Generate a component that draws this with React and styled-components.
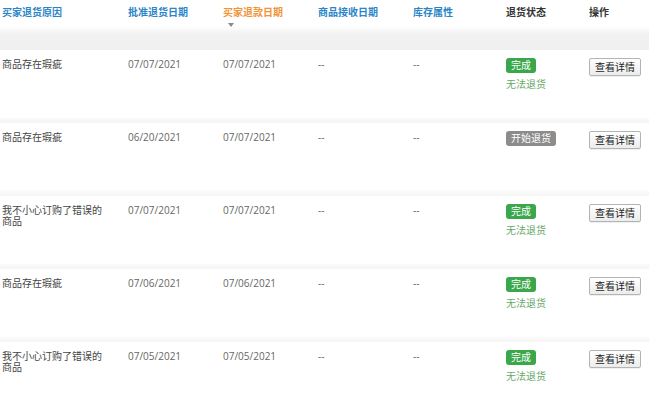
import React from "react";
import styled, { createGlobalStyle } from "styled-components";

const Global = createGlobalStyle`
  html, body { margin: 0; padding: 0; background: #fff; }
  body { font-family: "Open Sans", "Noto Sans CJK SC", sans-serif; }
`;

const cols = "126px 95px 95px 95px 93px 83px 1fr";

const Table = styled.div`
  width: 649px;
  box-sizing: border-box;
`;

const HeaderRow = styled.div`
  display: grid;
  grid-template-columns: ${cols};
  height: 50px;
  padding-left: 2px;
  box-sizing: border-box;
  background: linear-gradient(to bottom, #ffffff 0px, #ffffff 26px, #f1f1f1 34px, #f0f0f0 100%);
`;

const Th = styled.div`
  padding-top: 6px;
  font-size: 10px;
  line-height: 13px;
  font-weight: 700;
  color: ${(p) => (p.$tone === "sort" ? "#f0943a" : p.$tone === "plain" ? "#333" : "#2a86c8")};
  display: flex;
  flex-direction: column;
  align-items: flex-start;
`;

const SortArrow = styled.span`
  margin: 4px 0 0 5px;
  width: 0;
  height: 0;
  border-left: 3px solid transparent;
  border-right: 3px solid transparent;
  border-top: 4px solid #8a8a8a;
`;

const Row = styled.div`
  display: grid;
  grid-template-columns: ${cols};
  height: 73px;
  padding: 7px 0 0 2px;
  box-sizing: border-box;
  background: linear-gradient(to bottom, #ffffff 0px, #ffffff 67px, #f9f9f9 69px, #f5f5f5 73px);
`;

const Td = styled.div`
  font-size: 10px;
  line-height: 12px;
  color: ${(p) => (p.$muted ? "#666" : "#444")};
  padding-top: 1px;
`;

const Reason = styled(Td)`
  padding-right: 20px;
  line-height: 11px;
  padding-top: 2px;
`;

const StatusCell = styled.div`
  display: flex;
  flex-direction: column;
  align-items: flex-start;
  gap: 5px;
  padding-top: 1px;
`;

const Badge = styled.span`
  display: inline-block;
  padding: 0 5px;
  height: 15px;
  line-height: 15px;
  font-size: 10px;
  border-radius: 3px;
  color: #fff;
  background: ${(p) => (p.$gray ? "#8c8c8c" : "#3aa84a")};
`;

const SubStatus = styled.span`
  font-size: 10px;
  line-height: 12px;
  color: #6aa86a;
`;

const ActionCell = styled.div`
  display: flex;
  align-items: flex-start;
  padding-top: 1px;
`;

const DetailButton = styled.button`
  height: 18px;
  margin: 0;
  padding: 0 5px;
  font-family: "Open Sans", "Noto Sans CJK SC", sans-serif;
  font-size: 10px;
  line-height: 16px;
  color: #222;
  border: 1px solid #b4b4b4;
  border-radius: 2px;
  background: linear-gradient(to bottom, #ffffff, #ececec);
  box-shadow: 0 1px 0 rgba(0, 0, 0, 0.06);
`;

const rows = [
  { reason: "商品存在瑕疵", approved: "07/07/2021", refund: "07/07/2021", done: true },
  { reason: "商品存在瑕疵", approved: "06/20/2021", refund: "07/07/2021", done: false },
  { reason: "我不小心订购了错误的商品", approved: "07/07/2021", refund: "07/07/2021", done: true },
  { reason: "商品存在瑕疵", approved: "07/06/2021", refund: "07/06/2021", done: true },
  { reason: "我不小心订购了错误的商品", approved: "07/05/2021", refund: "07/05/2021", done: true },
];

export default function App() {
  return (
    <>
      <Global />
      <Table>
        <HeaderRow>
          <Th>买家退货原因</Th>
          <Th>批准退货日期</Th>
          <Th $tone="sort">
            买家退款日期
            <SortArrow />
          </Th>
          <Th>商品接收日期</Th>
          <Th>库存属性</Th>
          <Th $tone="plain">退货状态</Th>
          <Th $tone="plain">操作</Th>
        </HeaderRow>
        {rows.map((r, i) => (
          <Row key={i}>
            <Reason>{r.reason}</Reason>
            <Td $muted>{r.approved}</Td>
            <Td $muted>{r.refund}</Td>
            <Td $muted>--</Td>
            <Td $muted>--</Td>
            <StatusCell>
              {r.done ? (
                <>
                  <Badge>完成</Badge>
                  <SubStatus>无法退货</SubStatus>
                </>
              ) : (
                <Badge $gray>开始退货</Badge>
              )}
            </StatusCell>
            <ActionCell>
              <DetailButton>查看详情</DetailButton>
            </ActionCell>
          </Row>
        ))}
      </Table>
    </>
  );
}
